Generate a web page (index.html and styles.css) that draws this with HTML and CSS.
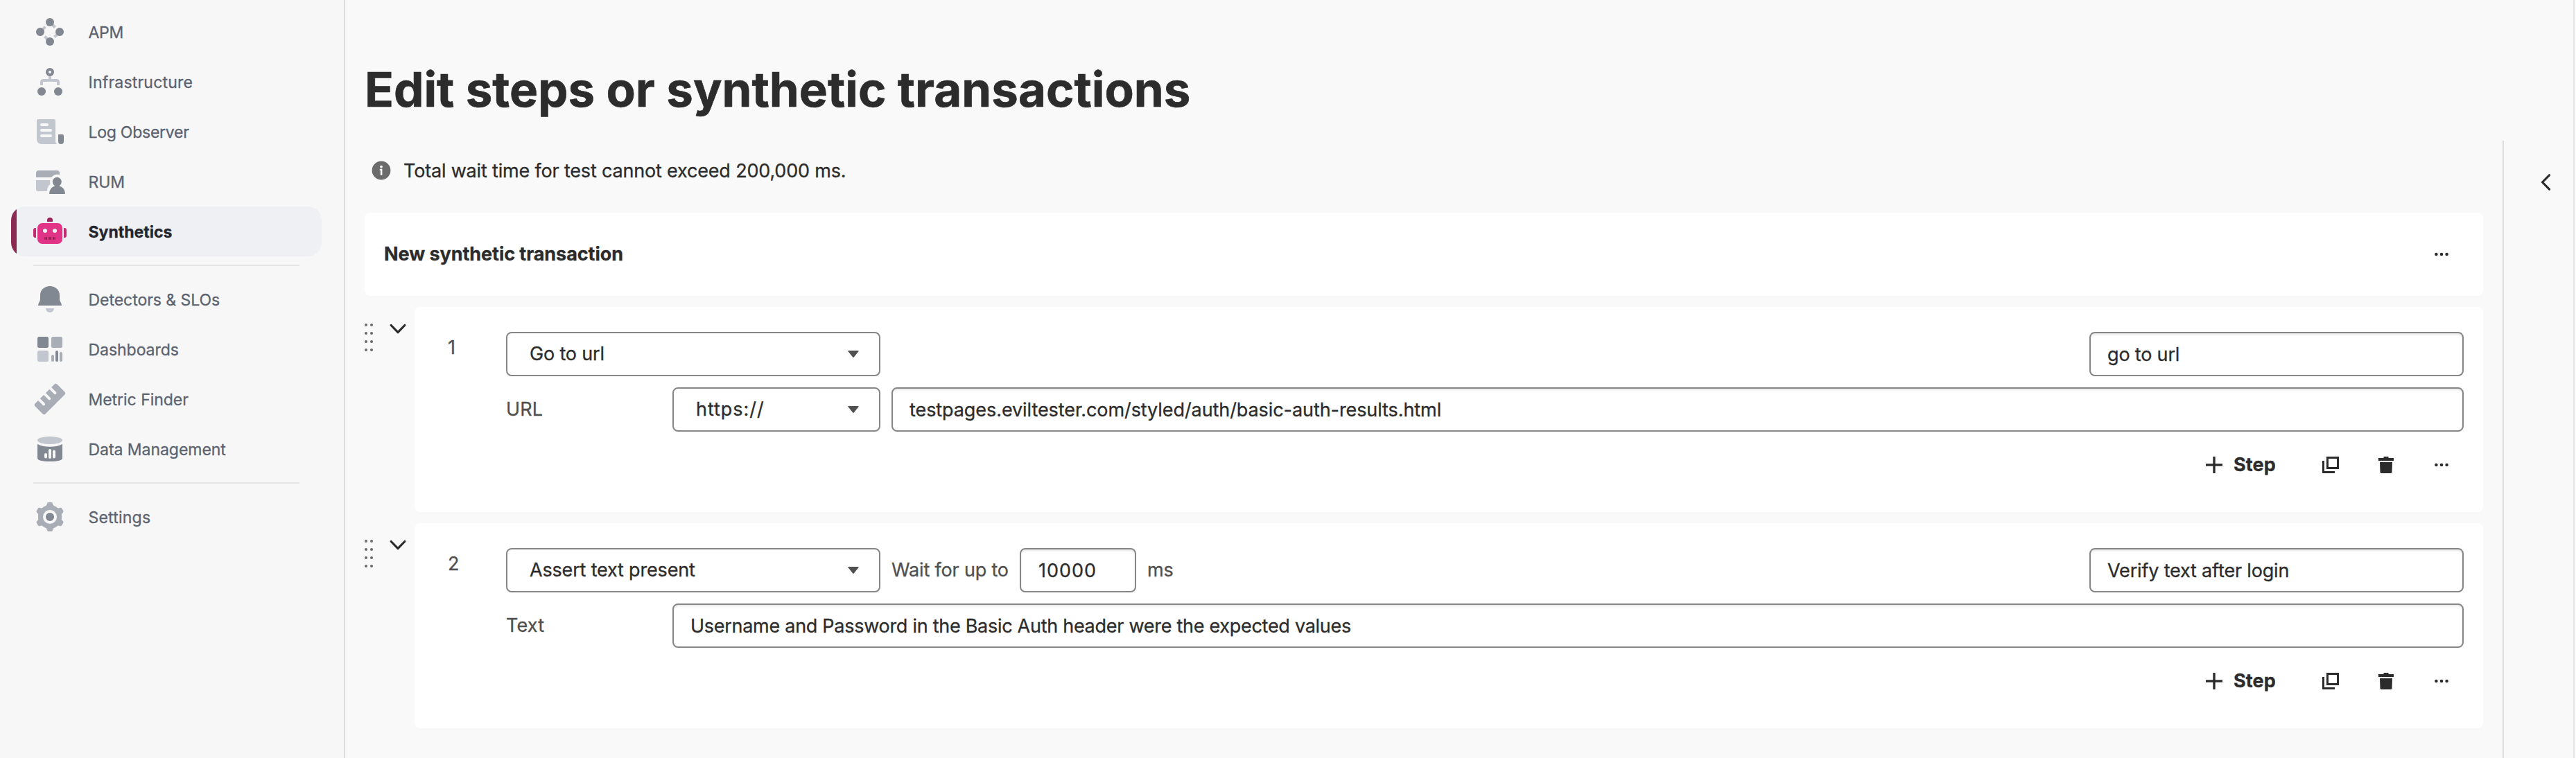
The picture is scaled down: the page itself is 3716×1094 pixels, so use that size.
FILE: index.html
```html
<!DOCTYPE html>
<html lang="en">
<head>
<meta charset="utf-8">
<title>Edit steps or synthetic transactions</title>
<link rel="stylesheet" href="styles.css">
</head>
<body>
<svg class="sprite" aria-hidden="true">
  <symbol id="more" viewBox="0 0 24 24"><circle cx="4.4" cy="12" r="2.3"/><circle cx="12" cy="12" r="2.3"/><circle cx="19.6" cy="12" r="2.3"/></symbol>
  <symbol id="plus" viewBox="0 0 24 24"><path d="M10.3 0h3.4v24h-3.4z"/><path d="M0 10.3h24v3.4H0z"/></symbol>
  <symbol id="copy" viewBox="0 0 24 24"><path fill-rule="evenodd" d="M6 0h18v18H6zM9 3v12h12V3z"/><path d="M0 6h3v15h15v3H0z"/></symbol>
  <symbol id="trash" viewBox="0 0 24 24"><path d="M8.5 0h7v2H23v4H1V2h7.500z"/><path d="M3 8h18l-.5 14.200q-.1 1.800-1.500 1.800H5q-1.400 0-1.500-1.800z"/></symbol>
  <symbol id="caret" viewBox="0 0 16 10"><path d="M1 0h14q1.200 0 .6 1L9 9.300q-1 1.200-2 0L.4 1Q-.2 0 1 0z"/></symbol>
  <symbol id="chevron" viewBox="0 0 24 16"><path d="M2.200 2.500L12 12.700 21.800 2.500" fill="none" stroke="currentColor" stroke-width="3.200" stroke-linecap="round" stroke-linejoin="round"/></symbol>
  <symbol id="grip" viewBox="0 0 14 42"><g><circle cx="2" cy="3" r="2"/><circle cx="10" cy="3" r="2"/><circle cx="2" cy="15" r="2"/><circle cx="10" cy="15" r="2"/><circle cx="2" cy="27" r="2"/><circle cx="10" cy="27" r="2"/><circle cx="2" cy="39" r="2"/><circle cx="10" cy="39" r="2"/></g></symbol>
</svg>

<nav class="sidebar">
  <a class="nav-item"><svg class="nav-icon" viewBox="0 0 48 48"><path class="s-light" d="M10 24l7.500-7.500M24 10l7.500 7.500M38 24l-7.500 7.500M24 38l-7.500-7.500"/><g class="dark"><circle cx="24" cy="10" r="6"/><circle cx="10" cy="24" r="6"/><circle cx="38" cy="24" r="6"/><circle cx="24" cy="38" r="6"/></g></svg><span class="nav-label t-apm">APM</span></a>
  <a class="nav-item"><svg class="nav-icon" viewBox="0 0 48 48"><path class="s-light" d="M24 15v7M12 29v-4.500q0-2.500 2.500-2.500h19q2.500 0 2.500 2.500V29"/><g class="dark"><circle cx="24" cy="10" r="6"/><circle cx="12" cy="38" r="6"/><circle cx="36" cy="38" r="6"/></g><circle class="bg" cx="24" cy="10" r="2"/></svg><span class="nav-label t-wide">Infrastructure</span></a>
  <a class="nav-item"><svg class="nav-icon" viewBox="0 0 48 48"><path class="light" d="M7 6h23q2 0 2 2v30q0 2.500 2 4H13q-8 0-8-8V8q0-2 2-2z"/><g class="bg"><rect x="10" y="12" width="12" height="4" rx="2"/><rect x="10" y="20" width="17" height="4" rx="2"/><rect x="10" y="28" width="17" height="4" rx="2"/></g><path class="dark" d="M36 28h6q2 0 2 2v8a4 4 0 0 1-8 0z"/></svg><span class="nav-label t-log">Log Observer</span></a>
  <a class="nav-item"><svg class="nav-icon" viewBox="0 0 48 48"><path class="mid" d="M8 8h26q4 0 4 4v2.300Q31 12.300 26 18H4v-6q0-4 4-4z"/><path class="light" d="M4 22h20.300q-.6 3 .3 5.500Q20 31.500 20 38H7q-3 0-3-3z"/><g class="dark"><circle cx="34.300" cy="24.300" r="6.500"/><path d="M30.500 28.500h7.600l-.3 2Q45.500 33 46 41q0 1-1 1H24q-1 0-1-1 .6-8 8-10.500z"/></g></svg><span class="nav-label">RUM</span></a>
  <a class="nav-item active"><svg class="nav-icon" viewBox="0 0 48 48"><rect class="pink" x="6" y="12" width="36" height="30" rx="7"/><g class="magenta"><path d="M4 19v14H3q-3 0-3-3v-8q0-3 3-3z"/><path d="M44 19v14h1q3 0 3-3v-8q0-3-3-3z"/></g><g class="plum"><path d="M20 10V8a4 4 0 0 1 8 0v2z"/><path d="M18 32h2v4h-2q-2 0-2-2t2-2zM22 32h4v4h-4zM28 32h2q2 0 2 2t-2 2h-2z"/></g><g class="eye"><circle cx="17" cy="23" r="3"/><circle cx="31" cy="23" r="3"/></g></svg><span class="nav-label t-syn">Synthetics</span></a>
  <hr class="divider">
  <a class="nav-item"><svg class="nav-icon" viewBox="0 0 48 48"><path class="dark" d="M24 5c8 0 14 5.500 14 13v6c0 3 3 5.500 3 9H7c0-3.500 3-6 3-9v-6c0-7.500 6-13 14-13z"/><path class="light" d="M18 37h12a6 6 0 0 1-12 0z"/></svg><span class="nav-label">Detectors &amp; SLOs</span></a>
  <a class="nav-item"><svg class="nav-icon" viewBox="0 0 48 48"><rect class="dark" x="6" y="6" width="16" height="16" rx="2.500"/><rect class="mid" x="26" y="6" width="16" height="16" rx="2.500"/><rect class="light" x="6" y="26" width="16" height="16" rx="2.500"/><rect class="mid" x="26" y="32" width="4" height="10" rx="2"/><rect class="dark" x="32" y="26" width="4" height="16" rx="2"/><rect class="mid" x="38" y="28" width="4" height="14" rx="2"/></svg><span class="nav-label">Dashboards</span></a>
  <a class="nav-item"><svg class="nav-icon" viewBox="0 0 48 48"><g transform="translate(24 24) rotate(-45)"><rect class="mid" x="-22.500" y="-10.500" width="45" height="21" rx="3"/><path class="notch" d="M-11.500-13v12M0-13v12M11.500-13v12"/></g></svg><span class="nav-label">Metric Finder</span></a>
  <a class="nav-item"><svg class="nav-icon" viewBox="0 0 48 48"><ellipse class="light" cx="24" cy="11.500" rx="18" ry="5.500"/><path class="dark" d="M6 17q6 3.700 18 3.700T42 17v20q0 5-18 5T6 37z"/><g class="bg"><rect x="16" y="30" width="4" height="7.500" rx="2"/><rect x="22" y="24" width="4" height="14" rx="2"/><rect x="28" y="25.500" width="4" height="12" rx="2"/></g></svg><span class="nav-label">Data Management</span></a>
  <hr class="divider">
  <a class="nav-item"><svg class="nav-icon" viewBox="0 0 48 48"><g class="mid"><circle cx="24" cy="24" r="17"/><path id="tooth" d="M15.500 10q4.300-1.800 4.300-5 .4-2 2.200-2h4q1.800 0 2.200 2 0 3.200 4.300 5z"/><use href="#tooth" transform="rotate(60 24 24)"/><use href="#tooth" transform="rotate(120 24 24)"/><use href="#tooth" transform="rotate(180 24 24)"/><use href="#tooth" transform="rotate(240 24 24)"/><use href="#tooth" transform="rotate(300 24 24)"/></g><circle class="bg" cx="24" cy="24" r="10"/><circle class="dark" cx="24" cy="24" r="6"/></svg><span class="nav-label t-wide">Settings</span></a>
</nav>

<main class="main">
  <h1 class="title">Edit steps or synthetic transactions</h1>
  <div class="body">
    <section class="content">
      <div class="info">
        <svg class="info-icon" viewBox="0 0 28 28"><circle cx="14" cy="14" r="13.400"/><circle class="info-mark" cx="14" cy="8.600" r="1.900"/><path class="info-mark" d="M11.800 11.800h3.600V21h-2.600v-7h-1z"/></svg>
        <span>Total wait time for test cannot exceed 200,000 ms.</span>
      </div>
      <header class="transaction">
        <h2 class="transaction-name">New synthetic transaction</h2>
        <button class="icon-btn"><svg class="icon"><use href="#more"/></svg></button>
      </header>

      <article class="step">
        <div class="gutter"><svg class="grip"><use href="#grip"/></svg><svg class="chevron"><use href="#chevron"/></svg></div>
        <div class="card">
          <div class="number">1</div>
          <div class="fields">
            <div class="row">
              <div class="select wide"><span>Go to url</span><svg class="caret"><use href="#caret"/></svg></div>
              <input class="input name" value="go to url">
            </div>
            <div class="row">
              <div class="pair"><span class="label key">URL</span><div class="select protocol"><span class="t-https">https://</span><svg class="caret"><use href="#caret"/></svg></div></div>
              <input class="input grow t-url" value="testpages.eviltester.com/styled/auth/basic-auth-results.html">
            </div>
            <div class="row actions">
              <button class="step-btn"><svg class="icon"><use href="#plus"/></svg><span>Step</span></button>
              <button class="icon-btn"><svg class="icon"><use href="#copy"/></svg></button>
              <button class="icon-btn"><svg class="icon"><use href="#trash"/></svg></button>
              <button class="icon-btn"><svg class="icon"><use href="#more"/></svg></button>
            </div>
          </div>
        </div>
      </article>

      <article class="step">
        <div class="gutter"><svg class="grip"><use href="#grip"/></svg><svg class="chevron"><use href="#chevron"/></svg></div>
        <div class="card">
          <div class="number">2</div>
          <div class="fields">
            <div class="row">
              <div class="select wide"><span>Assert text present</span><svg class="caret"><use href="#caret"/></svg></div>
              <span class="label wait">Wait for up to</span>
              <input class="input ms" value="10000">
              <span class="label">ms</span>
              <input class="input name" value="Verify text after login">
            </div>
            <div class="row text-row">
              <span class="label key">Text</span>
              <input class="input grow t-text" value="Username and Password in the Basic Auth header were the expected values">
            </div>
            <div class="row actions">
              <button class="step-btn"><svg class="icon"><use href="#plus"/></svg><span>Step</span></button>
              <button class="icon-btn"><svg class="icon"><use href="#copy"/></svg></button>
              <button class="icon-btn"><svg class="icon"><use href="#trash"/></svg></button>
              <button class="icon-btn"><svg class="icon"><use href="#more"/></svg></button>
            </div>
          </div>
        </div>
      </article>
    </section>
    <aside class="panel"><svg class="panel-toggle" viewBox="0 0 16 24"><path d="M12.500 1.800L2.500 12l10 10.200"/></svg></aside>
  </div>
</main>
</body>
</html>
```
FILE: styles.css
```css
* { box-sizing: border-box; }
body {
  margin: 0;
  height: 1094px;
  display: flex;
  overflow: hidden;
  background: #f9f9f9;
  color: #2c2c2c;
  font: 400 27px/1.2 Inter, "Liberation Sans", sans-serif;
  letter-spacing: -0.18px;
  -webkit-text-stroke: 0.3px;
}
h1, h2 { margin: 0; }
button { font: inherit; color: inherit; border: 0; padding: 0; background: none; }
svg { display: block; flex: none; fill: currentColor; }
.sprite { display: none; }

/* sidebar */
.sidebar {
  flex: none;
  width: 498px;
  padding: 10px 32px 0 16px;
  background: #f7f7f7;
  border-right: 2px solid #dcdddf;
}
.nav-item {
  display: flex;
  align-items: center;
  gap: 31.5px;
  height: 72px;
  padding-left: 32px;
  color: #5c6370;
  font-size: 23px;
  letter-spacing: -0.04px;
}
.nav-item.active {
  color: #23252d;
  font-weight: 700;
  border-radius: 20px;
  background: linear-gradient(to right, #8b2a52 8px, #eff0f3 8px);
}
.nav-icon { width: 48px; height: 48px; }
.nav-label { padding-top: 3px; }
.divider { margin: 12px 32px; height: 2px; border: 0; background: #e4e5e6; }
.dark { fill: #818891; }
.mid { fill: #a8adb6; }
.light { fill: #c2c6cf; }
.bg { fill: #f7f7f7; }
.s-light { fill: none; stroke: #c2c6cf; stroke-width: 4; }
.notch { fill: none; stroke: #f7f7f7; stroke-width: 4; stroke-linecap: round; }
.pink { fill: #e23487; }
.magenta { fill: #c42b75; }
.plum { fill: #9c215b; }
.eye { fill: #eff0f3; }
.t-apm { letter-spacing: -0.28px; }
.t-wide { letter-spacing: 0.21px; }
.t-log { letter-spacing: -0.25px; }
.t-syn { letter-spacing: 0; }

/* main area */
.main {
  flex: 1;
  display: flex;
  flex-direction: column;
  margin-right: 2px;
  border-right: 2px solid #e6e6e6;
}
.title {
  height: 203px;
  padding: 87px 0 0 28px;
  font-size: 69px;
  font-weight: 700;
  line-height: 84px;
  letter-spacing: 0;
  -webkit-text-stroke: 0.6px;
}
.body { flex: 1; display: flex; }
.content {
  flex: 1;
  display: flex;
  flex-direction: column;
  gap: 16px;
  padding: 0 28px;
}
.info {
  display: flex;
  align-items: center;
  gap: 18px;
  height: 88px;
  padding: 0 0 2px 10px;
}
.info-icon { width: 28px; height: 28px; color: #6b6b6b; }
.info-mark { fill: #f9f9f9; }
.info span { padding-top: 3px; }
.transaction {
  display: flex;
  align-items: center;
  justify-content: space-between;
  height: 120px;
  padding: 0 28px;
  border-radius: 8px;
  background: #fff;
}
.transaction-name { padding-top: 1px; font-size: 27px; font-weight: 700; letter-spacing: -0.06px; }

/* steps */
.step { display: flex; }
.gutter {
  flex: none;
  width: 72px;
  display: flex;
  align-items: flex-start;
  justify-content: space-between;
  padding: 23px 12px 0 0;
}
.grip { width: 14px; height: 42px; color: #6b6b6b; }
.chevron { width: 24px; height: 16px; margin-top: 1px; }
.card {
  flex: 1;
  display: flex;
  height: 296px;
  padding: 36px 28px 36px 48px;
  border-radius: 8px;
  background: #fff;
}
.number { width: 84px; line-height: 46px; color: #505050; }
.fields { flex: 1; display: flex; flex-direction: column; gap: 16px; }
.row { display: flex; align-items: center; gap: 16px; height: 64px; }
.pair { display: flex; align-items: center; width: 540px; }
.text-row { gap: 0; }
.label { padding-top: 1px; color: #505050; }
.key { width: 240px; letter-spacing: 0.2px; }
.wait { width: 169px; }
.select, .input {
  height: 64px;
  border: 2px solid #868686;
  border-radius: 8px;
  background: #fff;
}
.select {
  display: flex;
  align-items: center;
  justify-content: space-between;
  padding: 0 29px 0 32px;
}
.select span { padding-top: 1px; }
.wide { width: 540px; }
.protocol { width: 300px; }
.caret { width: 16px; height: 10px; color: #505050; }
.input {
  min-width: 0;
  padding: 1px 23px 0 24px;
  color: inherit;
  font: inherit;
  letter-spacing: inherit;
  outline: 0;
  box-shadow: inset 0 2px 3px rgba(0, 0, 0, 0.1);
}
.name { width: 540px; margin-left: auto; }
.ms { width: 168px; padding-left: 25px; letter-spacing: 1px; }
.grow { flex: 1; }
.t-https { letter-spacing: 0.96px; }
.t-url { letter-spacing: -0.08px; }
.t-text { letter-spacing: -0.28px; }
.actions { justify-content: flex-end; }
.icon { width: 24px; height: 24px; }
.icon-btn {
  display: flex;
  align-items: center;
  justify-content: center;
  width: 64px;
  height: 64px;
}
.step-btn {
  display: flex;
  align-items: center;
  gap: 16px;
  width: 164px;
  height: 64px;
  padding-left: 32px;
  font-weight: 700;
  letter-spacing: 0.1px;
}
.step-btn span { padding-top: 1px; }

/* collapsed side panel */
.panel { width: 102px; padding: 48px 0 0 53px; border-left: 2px solid #dcdcdc; }
.panel-toggle {
  width: 16px;
  height: 24px;
  fill: none;
  stroke: #2c2c2c;
  stroke-width: 3.2;
  stroke-linecap: round;
  stroke-linejoin: round;
}
```
